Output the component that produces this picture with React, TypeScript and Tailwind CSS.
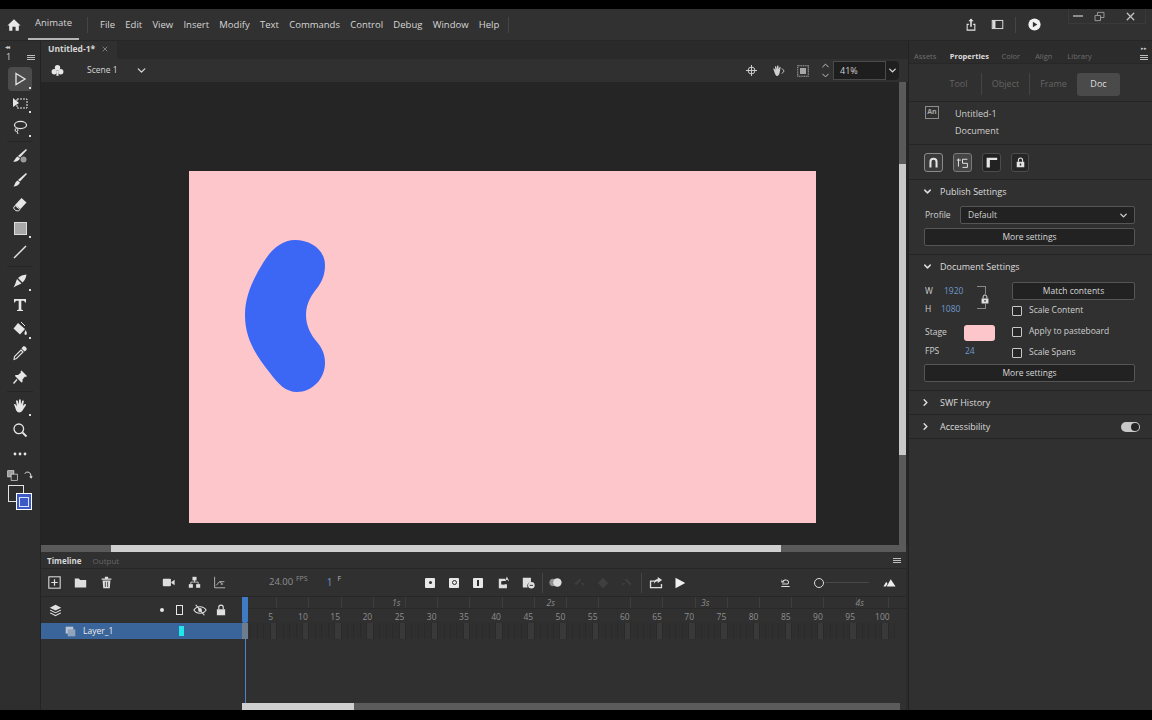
import type { ReactNode } from 'react';
import { ChevronDown, ChevronRight, X } from 'lucide-react';

const Ico = ({ size = 16, children }: { size?: number; children: ReactNode }) => (
  <svg width={size} height={size} viewBox="0 0 16 16" fill="currentColor" className="shrink-0">
    {children}
  </svg>
);

const Burger = () => (
  <div className="flex flex-col gap-px w-2">
    <div className="h-px bg-[#bdbdbd]" />
    <div className="h-px bg-[#bdbdbd]" />
    <div className="h-px bg-[#bdbdbd]" />
  </div>
);

const Tool = ({ children, corner, active }: { children: ReactNode; corner?: boolean; active?: boolean }) => (
  <div className={active ? 'relative w-6 h-6 flex items-center justify-center rounded-sm bg-[#4b4b4b] text-[#e6e6e6]' : 'relative w-6 h-6 flex items-center justify-center text-[#e6e6e6]'}>
    {children}
    {corner && <span className="absolute right-[1px] bottom-[2px] w-[2px] h-[2px] bg-[#e0e0e0]" />}
  </div>
);

const ToolDivider = () => <div className="w-[26px] h-px bg-[#252525] my-[2px]" />;

function Toolbar() {
  return (
    <div className="w-[41px] shrink-0 flex flex-col items-center bg-[#2e2e2e] border-r border-[#232323]">
      <div className="h-[26px] w-full relative text-[#cfcfcf]">
        <div className="absolute left-[5px] top-[2px] text-[6px] leading-[8px] tracking-[-1px]">◂◂</div>
        <div className="absolute left-[6px] top-[10px] text-[9px] leading-[12px]">1</div>
        <div className="absolute left-[27px] top-[14px]"><Burger /></div>
      </div>
      <Tool active corner>
        <Ico><path d="M4 2.5 L13 8 L4 13.5 Z" fill="none" stroke="currentColor" strokeWidth="1.3" /></Ico>
      </Tool>
      <Tool corner>
        <Ico><path d="M1 3 L7 8 L1 12 Z" /><rect x="5" y="4" width="10" height="9" fill="none" stroke="currentColor" strokeDasharray="2 1" /></Ico>
      </Tool>
      <Tool corner>
        <Ico><ellipse cx="8.5" cy="6" rx="6" ry="3.6" fill="none" stroke="currentColor" strokeWidth="1.2" /><circle cx="4.5" cy="11" r="1.5" fill="none" stroke="currentColor" /><path d="M5 12.5 L6 15" stroke="currentColor" /></Ico>
      </Tool>
      <ToolDivider />
      <Tool>
        <Ico><path d="M14 1 L15 2 L8 9.5 L6 8 Z" /><path d="M5.5 8.5 L8 10.5 C7 13 4 14 1 13.5 C3 12.5 3 10 5.5 8.5 Z" /><circle cx="11.5" cy="11.5" r="3" fill="#9a9a9a" /></Ico>
      </Tool>
      <Tool>
        <Ico><path d="M14 1 L15 2 L8 9.5 L6 8 Z" /><path d="M5.5 8.5 L8 10.5 C7 13 4 14.5 1.5 14.5 C3 12.5 3 10 5.5 8.5 Z" /></Ico>
      </Tool>
      <Tool>
        <Ico><path d="M9.5 2 L14.5 6.5 L8.5 13 L3 9 Z" /><path d="M3 9.5 L8 13.5 L6.5 15 L3.5 14.5 L1.5 12 Z" fill="none" stroke="currentColor" /></Ico>
      </Tool>
      <Tool corner>
        <div className="w-[13px] h-[13px] bg-[#a8a8a8] border border-[#dcdcdc]" />
      </Tool>
      <Tool>
        <Ico><path d="M2 14 L14 2" stroke="currentColor" strokeWidth="1.4" /></Ico>
      </Tool>
      <ToolDivider />
      <Tool corner>
        <Ico><path d="M14.5 1.5 C14 5 12.5 8 10.5 9.5 L6 5 C8 3 11 1.8 14.5 1.5 Z" /><path d="M5 6 L9.5 10.5 L4 13 L1.5 14.5 L3 11.5 Z" /></Ico>
      </Tool>
      <Tool>
        <Ico><path d="M2 2 H14 V5.5 H13 C12.7 4.2 12 3.8 10.5 3.8 H9.3 V12 C9.3 12.8 9.7 13 11 13 V14 H5 V13 C6.3 13 6.7 12.8 6.7 12 V3.8 H5.5 C4 3.8 3.3 4.2 3 5.5 H2 Z" /></Ico>
      </Tool>
      <Tool corner>
        <Ico><path d="M6 2 L13 8 L8 13.5 L1.5 7.5 Z" /><path d="M9 1 L13 5" stroke="currentColor" /><path d="M13.5 9 C14.5 11 15.5 12 14.5 13.5 C13.5 14.5 12 13.5 12.5 12 Z" /></Ico>
      </Tool>
      <Tool>
        <Ico><path d="M11 1.5 C12.5 0.5 15.5 3 14.5 5 L12.5 6.5 L9.5 3.5 Z" /><path d="M9 5 L11 7 L4.5 13.5 L2 14.5 L2.5 11.5 Z" fill="none" stroke="currentColor" strokeWidth="1.1" /></Ico>
      </Tool>
      <Tool>
        <Ico><path d="M9 1.5 L14.5 7 L13.5 8 L12.5 7.5 L10 10.5 L10 13 L9 13.5 L2.5 7 L3 6 L5.5 6 L8.5 3.5 L8 2.5 Z" transform="translate(0.5 0)" /><path d="M5 10.5 L1.5 14.5" stroke="currentColor" strokeWidth="1.4" /></Ico>
      </Tool>
      <ToolDivider />
      <Tool corner>
        <Ico><path d="M3 9 L2 6.5 C2.5 5.8 3.5 6 4 7 L5 8.5 L4 3 C4.5 2 5.5 2.2 5.8 3 L6.8 6.5 L7 1.8 C7.5 1 8.5 1 8.8 2 L9 6.5 L10.3 2.8 C11 2 12 2.5 11.8 3.4 L10.8 8 L12.5 6.2 C13.5 5.8 14.3 6.5 13.8 7.5 L10.8 12 C10 14 8 14.8 6 14.3 C4.5 13.8 3.8 11.5 3 9 Z" /></Ico>
      </Tool>
      <Tool>
        <Ico><circle cx="6.8" cy="6.8" r="4.8" fill="none" stroke="currentColor" strokeWidth="1.3" /><path d="M10.5 10.5 L14.5 14.5" stroke="currentColor" strokeWidth="1.8" /></Ico>
      </Tool>
      <Tool>
        <Ico><circle cx="3" cy="8" r="1.4" /><circle cx="8" cy="8" r="1.4" /><circle cx="13" cy="8" r="1.4" /></Ico>
      </Tool>
      <div className="w-[26px] h-[14px] mt-[2px] flex justify-between items-center text-[#e6e6e6]">
        <Ico size={11}><rect x="1" y="1" width="9" height="9" fill="#9c9c9c" stroke="currentColor" /><rect x="6" y="6" width="9" height="9" fill="#2e2e2e" stroke="currentColor" /></Ico>
        <Ico size={10}><path d="M3 6 C4 3 9 2 12 6 L13 11" fill="none" stroke="currentColor" strokeWidth="1.6" /><path d="M10 10 L13 14 L15.5 10 Z" /></Ico>
      </div>
      <div className="relative w-[26px] h-[26px] mt-[3px]">
        <div className="absolute left-[1px] top-0 w-[16px] h-[17px] border border-[#e4e4e4]" />
        <div className="absolute left-[9px] top-[8px] w-[16px] h-[17px] bg-[#3d59c4] border border-[#ffffff] flex items-center justify-center">
          <div className="w-[10px] h-[10px] border border-[#dbe2ff]" />
        </div>
      </div>
    </div>
  );
}

const menus = ['File', 'Edit', 'View', 'Insert', 'Modify', 'Text', 'Commands', 'Control', 'Debug', 'Window', 'Help'];

function MenuBar() {
  return (
    <div className="h-[32px] shrink-0 flex items-center bg-[#313131] border-b border-[#262626] text-[9.5px] text-[#d6d6d6]">
      <div className="w-[28px] pl-[7px] text-[#e8e8e8]">
        <Ico size={14}><path d="M8 1.5 L15.5 8.5 H13.5 V14.5 H9.8 V10 H6.2 V14.5 H2.5 V8.5 H0.5 Z" /></Ico>
      </div>
      <div className="w-[51px] h-full flex items-center justify-center border-b-2 border-[#b5b5b5]">Animate</div>
      <div className="w-px h-[16px] bg-[#454545] ml-[8px]" />
      <div className="flex items-center gap-[10.25px] ml-[12px] pt-[1px]">
        {menus.map((m) => <span key={m}>{m}</span>)}
      </div>
      <div className="w-px h-[16px] bg-[#454545] ml-[9px]" />
      <div className="flex-1" />
      <div className="text-[#e6e6e6] mr-[13px]">
        <Ico size={14}><path d="M3 6.5 H5.5 V8 H4.2 V13.2 H11.8 V8 H10.5 V6.5 H13 V14.5 H3 Z" /><path d="M8 0.5 L11 3.8 H8.9 V10 H7.1 V3.8 H5 Z" /></Ico>
      </div>
      <div className="text-[#dcdcdc] mr-[11px]">
        <Ico size={13}><rect x="1.5" y="3" width="13" height="10" fill="none" stroke="currentColor" strokeWidth="1.2" /><rect x="2" y="3.5" width="3.5" height="9" /></Ico>
      </div>
      <div className="w-px h-[16px] bg-[#454545] mr-[12px]" />
      <div className="text-[#f2f2f2] mr-[27px]">
        <Ico size={13}><circle cx="8" cy="8" r="7.5" /><path d="M6 4.5 L11.5 8 L6 11.5 Z" fill="#313131" /></Ico>
      </div>
      <div className="self-start h-[15px] flex items-center text-[#9b9b9b] border border-[#3a3a3a] border-t-0 mr-[6px] pl-[4px] pr-[8px]">
        <div className="w-[10px] h-[2px] bg-[#8d8d8d] mr-[11px]" />
        <Ico size={11}><path d="M1.5 6.5 H9.5 V14 H1.5 Z M5 6 V2 H14.5 V9.5 H10" fill="none" stroke="currentColor" strokeWidth="1.4" /></Ico>
        <div className="ml-[19px] text-[#c4c4c4]"><X size={13} strokeWidth={2.4} /></div>
      </div>
    </div>
  );
}

function SceneBar() {
  return (
    <div className="h-[23px] shrink-0 flex items-center bg-[#303030] text-[#d6d6d6] text-[8.5px]">
      <div className="ml-[10px] text-[#e6e6e6]">
        <Ico size={13}><circle cx="8" cy="4.6" r="3.3" /><circle cx="4" cy="9.5" r="3.3" /><circle cx="12" cy="9.5" r="3.3" /><path d="M7.3 8 H8.7 L9.5 14.5 H6.5 Z" /></Ico>
      </div>
      <span className="ml-[23px]">Scene 1</span>
      <ChevronDown size={13} strokeWidth={2.4} className="ml-[17px] text-[#d8d8d8]" />
      <div className="flex-1" />
      <div className="mr-[14px] text-[#cfcfcf]">
        <Ico size={11}><circle cx="8" cy="8" r="5" fill="none" stroke="currentColor" strokeWidth="1.4" /><path d="M8 0 V16 M0 8 H16" stroke="currentColor" strokeWidth="1.4" /></Ico>
      </div>
      <div className="mr-[12px] text-[#d0d0d0]">
        <Ico size={14}><path d="M3.5 8 L2.5 5.5 C3 5 4 5.2 4.3 6 L5 7.2 L4.5 3 C5 2.2 5.8 2.5 6 3.2 L6.8 6 L7 2 C7.5 1.4 8.3 1.4 8.5 2.2 L8.8 6.2 L9.8 3.3 C10.4 2.8 11 3.2 10.9 4 L10 9.5 C9.5 12.5 8 14 6.5 13.6 C5 13 4.2 10 3.5 8 Z" /><path d="M12.5 5 L15 8 L12.5 11" fill="none" stroke="currentColor" /></Ico>
      </div>
      <div className="mr-[11px] text-[#a8a8a8]">
        <Ico size={12}><rect x="1" y="1" width="14" height="14" fill="none" stroke="currentColor" strokeWidth="1.4" strokeDasharray="1.5 0.8" /><rect x="4" y="4" width="8" height="8" /></Ico>
      </div>
      <div className="flex flex-col mr-[2px] text-[#cfcfcf]">
        <ChevronDown size={11} strokeWidth={2} className="rotate-180 -mb-[1px]" />
        <ChevronDown size={11} strokeWidth={2} />
      </div>
      <div className="w-[53px] h-[19px] flex items-center pl-[6px] bg-[#1e1e1e] border border-[#4a4a4a] text-[9px] text-[#cfcfcf]">41%</div>
      <div className="w-[13px] h-[19px] flex items-center justify-center bg-[#1f1f1f] rounded-r-sm mr-[9px]">
        <ChevronDown size={11} strokeWidth={3} className="text-[#d8d8d8]" />
      </div>
    </div>
  );
}

function Canvas() {
  return (
    <div className="flex-1 flex min-h-0 bg-[#252525]">
      <div className="flex-1 pl-[148px] pt-[89px]">
        <div className="w-[627px] h-[352px] bg-[#fdc6cb]">
          <svg width="627" height="352" viewBox="0 0 627 352">
            <path d="M106 69 C123 69 136 80 136 94 C136 104 133 110 129 116 C123 123 117 132 117 144 C117 155 122 164 128 171 C133 177 136 183 136 192 C136 208 123 221 108 221 C97 221 89 213 81 202 C67 184 56 168 56 144 C56 125 64 108 74 92 C81 80 92 69 106 69 Z" fill="#3c66f4" />
          </svg>
        </div>
      </div>
      <div className="w-[7px] flex flex-col bg-[#5a5a5a] mr-[2px]">
        <div className="h-[82px]" />
        <div className="h-[291px] bg-[#c9c9c9]" />
      </div>
    </div>
  );
}

const frames = Array.from({ length: 101 }, (_, i) => i + 1);
const secondLabels: Record<number, string> = { 24: '1s', 48: '2s', 72: '3s', 96: '4s' };

function TimelineTools() {
  return (
    <div className="h-[28px] shrink-0 flex items-center border-b border-[#272727] text-[#dedede]">
      <div className="ml-[7px]"><Ico size={13}><rect x="1" y="1" width="14" height="14" fill="none" stroke="currentColor" strokeWidth="1.3" /><path d="M8 4 V12 M4 8 H12" stroke="currentColor" strokeWidth="1.5" /></Ico></div>
      <div className="ml-[13px]"><Ico size={13}><path d="M1 3 H6 L7.5 5 H15 V14 H1 Z" /></Ico></div>
      <div className="ml-[13px]"><Ico size={13}><path d="M6 1 H10 V3 H14 V4.5 H2 V3 H6 Z" /><path d="M3.2 5.5 H12.8 L12 15 H4 Z M6 7 V13.5 H7 V7 Z M9 7 V13.5 H10 V7 Z" fillRule="evenodd" /></Ico></div>
      <div className="ml-[49px]"><Ico size={13}><rect x="1" y="3.5" width="10" height="9" rx="1" /><path d="M11.5 7.5 L15.5 4.5 V11.5 L11.5 8.5 Z" /></Ico></div>
      <div className="ml-[13px]"><Ico size={13}><rect x="5.5" y="1" width="5" height="4.5" /><rect x="1" y="10" width="5" height="4.5" /><rect x="10" y="10" width="5" height="4.5" /><path d="M3.5 10 V7.5 H12.5 V10 M8 5 V7.5" fill="none" stroke="currentColor" /></Ico></div>
      <div className="ml-[12px] text-[#bdbdbd]"><Ico size={13}><path d="M2 1 V14.5 H15" fill="none" stroke="currentColor" strokeWidth="1.1" /><path d="M4 11.5 L8 7 L12 10 M12 10 L9.5 10 M8 7 L14 7" fill="none" stroke="currentColor" strokeWidth="1.1" /></Ico></div>
      <div className="ml-[43px] text-[9.5px] text-[#8f8f8f] w-[27px]">24.00</div>
      <div className="text-[7px] text-[#8f8f8f] -mt-[6px]">FPS</div>
      <div className="ml-[19px] text-[10px] text-[#6f95c4]">1</div>
      <div className="ml-[5px] text-[7px] text-[#b5b5b5] -mt-[6px]">F</div>
      <div className="ml-[84px] w-[10px] h-[10px] bg-[#e8e8e8] rounded-[1px] flex items-center justify-center"><div className="w-[3px] h-[3px] rounded-full bg-[#2c2c2c]" /></div>
      <div className="ml-[14px] w-[10px] h-[10px] bg-[#e8e8e8] rounded-[1px] flex items-center justify-center"><div className="w-[5px] h-[5px] rounded-full border border-[#2c2c2c]" /></div>
      <div className="ml-[14px] w-[10px] h-[10px] bg-[#e8e8e8] rounded-[1px] flex items-center justify-center"><div className="w-[2px] h-[6px] bg-[#2c2c2c]" /></div>
      <div className="ml-[15px]"><Ico size={13}><path d="M1 3.5 H9 V6 H6.5 A2 2 0 0 0 6.5 10 H11 V15 H1 Z" fillRule="evenodd" /><rect x="4" y="6.5" width="4" height="4" fill="#2c2c2c" /><path d="M11 0.5 L13.5 6 H12.5 L12 4.8 H10 L9.5 6 H8.5 Z" fill="#cfcfcf" /></Ico></div>
      <div className="ml-[11px]"><Ico size={13}><path d="M1 2 H11 V8 A4 4 0 0 0 7 14 H1 Z" /><circle cx="11.5" cy="11.5" r="4" fill="#e0e0e0" /><path d="M9.5 11.5 H13.5" stroke="#2c2c2c" strokeWidth="1.2" /></Ico></div>
      <div className="w-px h-[20px] bg-[#454545] ml-[7px]" />
      <div className="ml-[5px]"><Ico size={15}><circle cx="5.5" cy="8" r="4" fill="#8f8f8f" /><circle cx="10" cy="8" r="4.5" /></Ico></div>
      <div className="ml-[10px] text-[#3f3f3f]"><Ico size={12}><path d="M2 9 L9 2 L11 4 L4 11 Z M10 8 L14 8 L14 12 Z" /></Ico></div>
      <div className="ml-[12px] text-[#3f3f3f]"><Ico size={12}><path d="M8 1 L15 8 L8 15 L1 8 Z" /></Ico></div>
      <div className="ml-[12px] text-[#3f3f3f]"><Ico size={12}><path d="M14 9 L7 2 L5 4 L12 11 Z M6 8 L2 8 L2 12 Z" /></Ico></div>
      <div className="w-px h-[20px] bg-[#454545] ml-[8px]" />
      <div className="ml-[7px]"><Ico size={14}><path d="M1 5 H7 V6.5 H2.5 V12.5 H13.5 V9 H15 V14 H1 Z" /><path d="M10 1 L15 4.5 L10 8 V6 C8 6 6.5 7 5.5 9 C5.5 6 7 4 10 3.5 Z" /></Ico></div>
      <div className="ml-[11px] text-[#f0f0f0]"><Ico size={12}><path d="M2 1 L15 8 L2 15 Z" /></Ico></div>
      <div className="flex-1" />
      <div className="mr-[23px] text-[#e0e0e0]"><Ico size={11}><path d="M2 13 H14 V14.5 H2 Z M3 6 C6 2.5 12 3 13 7 C13.5 9 12.5 10.5 11 11 H3 V9.5 H10.5 C11.5 9 12 8 11.5 7 C10.8 4.8 7 4.5 5 6.5 L7 8 H2 V3 Z" /></Ico></div>
      <div className="w-[10px] h-[10px] rounded-full border-[1.5px] border-[#dcdcdc]" />
      <div className="w-[44px] h-px bg-[#484848] ml-[1px]" />
      <div className="ml-[14px] mr-[10px] text-[#ededed]"><Ico size={13}><path d="M0.5 13 L4 7 L5.5 9.5 L3.5 13 Z M4.5 13 L9.5 4 L15.5 13 Z" /></Ico></div>
    </div>
  );
}

function Timeline() {
  return (
    <div className="h-[158px] shrink-0 flex flex-col bg-[#303030] mr-[2px]">
      <div className="h-[17px] shrink-0 flex items-center pt-[1px] border-b border-[#272727] text-[8px]">
        <span className="ml-[6px] font-bold text-[#d8d8d8]">Timeline</span>
        <span className="ml-[11px] text-[#666666]">Output</span>
        <div className="flex-1" />
        <div className="mr-[5px]"><Burger /></div>
      </div>
      <TimelineTools />
      <div className="flex-1 min-h-0 flex relative">
        <div className="w-[204px] shrink-0 flex flex-col">
          <div className="h-[26px] flex items-center text-[#e0e0e0]">
            <div className="ml-[8px]"><Ico size={13}><path d="M8 1 L15 4.5 L8 8 L1 4.5 Z" /><path d="M2 7 L8 10 L14 7 L15 8 L8 11.5 L1 8 Z" /><path d="M2 10.5 L8 13.5 L14 10.5 L15 11.5 L8 15 L1 11.5 Z" /></Ico></div>
            <div className="ml-[98px] w-[4px] h-[4px] rounded-full bg-[#e6e6e6]" />
            <div className="ml-[12px] w-[7px] h-[10px] border-[1.5px] border-[#e6e6e6]" />
            <div className="ml-[10px]"><Ico size={14}><path d="M1 8 C4 3 12 3 15 8 C12 13 4 13 1 8 Z" fill="none" stroke="currentColor" strokeWidth="1.2" /><circle cx="8" cy="8" r="2.2" /><path d="M3 2 L13 14" stroke="currentColor" strokeWidth="1.3" /></Ico></div>
            <div className="ml-[8px]"><Ico size={12}><path d="M5 7 V4.5 A3 3 0 0 1 11 4.5 V7" fill="none" stroke="currentColor" strokeWidth="1.5" /><rect x="2.5" y="7" width="11" height="8" /></Ico></div>
          </div>
          <div className="h-[16px] flex items-center bg-[#3a659a] text-[8.5px] text-[#eaeaea]">
            <div className="ml-[24px] text-[#b8c4d4]"><Ico size={11}><rect x="1" y="1" width="11" height="10" /><rect x="4" y="5" width="11" height="10" fill="#8fa3bb" /></Ico></div>
            <span className="ml-[7px]">Layer_1</span>
            <div className="ml-[66px] w-[5px] h-[10px] bg-[#22e6ee]" />
          </div>
        </div>
        <div className="flex-1 min-w-0 flex flex-col overflow-hidden">
          <div className="h-[12px] flex border-b border-[#292929]">
            {frames.map((n) => (
              <div key={n} className={n % 5 === 0 ? 'w-[6.453px] shrink-0 flex justify-center border-r border-[#3d3d3d] text-[8.5px] leading-[12px] italic text-[#8d8d8d] whitespace-nowrap' : 'w-[6.453px] shrink-0 flex justify-center text-[8.5px] leading-[12px] italic text-[#8d8d8d] whitespace-nowrap'}>
                {secondLabels[n] ?? ''}
              </div>
            ))}
          </div>
          <div className="h-[14px] flex">
            {frames.map((n) => (
              <div key={n} className="w-[6.453px] shrink-0 flex justify-center pr-[6.4px] text-[8.5px] leading-[15px] text-[#8f8f8f] whitespace-nowrap">
                {n % 5 === 0 ? n : ''}
              </div>
            ))}
          </div>
          <div className="h-[16px] flex">
            {frames.map((n) => (
              <div key={n} className={n % 5 === 0 ? 'w-[6.453px] shrink-0 bg-[#393939] border-r border-[#2a2a2a]' : 'w-[6.453px] shrink-0 bg-[#2f2f2f] border-r border-[#2a2a2a]'} />
            ))}
          </div>
        </div>
        <div className="absolute left-[201px] top-0 bottom-0 w-[6px] flex flex-col items-center">
          <div className="w-[6px] h-[26px] bg-[#3f7bc4] rounded-b-[2px]" />
          <div className="w-[6px] h-[16px] bg-[#6d7c8e]" />
          <div className="w-px flex-1 bg-[#4a86cf]" />
        </div>
      </div>
      <div className="h-[7px] shrink-0 flex mr-[6px] bg-[#5b5b5b]">
        <div className="w-[201px] bg-[#303030]" />
        <div className="w-[112px] bg-[#cfcfcf]" />
      </div>
    </div>
  );
}

const Section = ({ title, open, children }: { title: string; open?: boolean; children?: ReactNode }) => (
  <div className="border-b border-[#242424]">
    <div className="h-[23px] flex items-center text-[9px] font-medium text-[#dcdcdc]">
      <div className="w-[31px] pl-[13px]">
        {open ? <ChevronDown size={11} strokeWidth={3.2} /> : <ChevronRight size={11} strokeWidth={3.2} className="-ml-[2px]" />}
      </div>
      <span>{title}</span>
    </div>
    {children}
  </div>
);

const DarkButton = ({ label }: { label: string }) => (
  <div className="h-[18px] flex items-center justify-center bg-[#222222] border border-[#555555] rounded-[2px] text-[8.5px] text-[#d8d8d8]">{label}</div>
);

const Checkbox = ({ label }: { label: string }) => (
  <div className="h-[21px] flex items-center text-[8.5px] text-[#cfcfcf]">
    <div className="w-[10px] h-[10px] border border-[#c8c8c8] rounded-[1px] mr-[7px] bg-[#262626]" />
    <span>{label}</span>
  </div>
);

function PropertiesPanel() {
  return (
    <div className="w-[244px] shrink-0 flex flex-col bg-[#303030] border-l border-[#222222]">
      <div className="h-[10px] shrink-0 flex justify-end items-end pr-[5px] text-[5px] leading-[6px] text-[#cfcfcf] bg-[#2c2c2c]">▸▸</div>
      <div className="h-[13px] shrink-0 flex items-center border-b border-[#272727] text-[7.5px] text-[#6e6e6e] bg-[#2c2c2c]">
        <span className="ml-[5px]">Assets</span>
        <span className="ml-[13.5px] font-bold text-[#dedede]">Properties</span>
        <span className="ml-[12.5px]">Color</span>
        <span className="ml-[15px]">Align</span>
        <span className="ml-[15px]">Library</span>
        <div className="flex-1" />
        <div className="mr-[4px]"><Burger /></div>
      </div>
      <div className="h-[38px] shrink-0 flex items-center pt-[3px] border-b border-[#252525] text-[9px] text-[#646464]">
        <div className="w-[45px] ml-[27px] flex items-center justify-center">Tool</div>
        <div className="w-px h-[22px] bg-[#444444]" />
        <div className="w-[47px] flex items-center justify-center">Object</div>
        <div className="w-px h-[22px] bg-[#444444]" />
        <div className="w-[47px] flex items-center justify-center">Frame</div>
        <div className="w-[43px] h-[23px] flex items-center justify-center rounded-[3px] bg-[#4a4a4a] text-[#dfdfdf]">Doc</div>
      </div>
      <div className="h-[43px] shrink-0 flex border-b border-[#252525] text-[9px] text-[#cfcfcf]">
        <div className="ml-[16px] mt-[4px] w-[14px] h-[13px] border border-[#8d8d8d] flex items-center justify-center text-[7px] font-bold text-[#a8a8a8]">An</div>
        <div className="ml-[16px] flex flex-col">
          <span className="leading-[12px] mt-[6px]">Untitled-1</span>
          <span className="leading-[12px] mt-[5px]">Document</span>
        </div>
      </div>
      <div className="h-[35px] shrink-0 flex items-center gap-[10px] pl-[15px] border-b border-[#252525] text-[#e4e4e4]">
        <div className="w-[19px] h-[19px] flex items-center justify-center rounded-[3px] bg-[#3a3a3a] border border-[#8a8a8a]">
          <Ico size={13}><path d="M3 14 V7 A5 5 0 0 1 13 7 V14 H10.5 V7 A2.5 2.5 0 0 0 5.5 7 V14 Z" /></Ico>
        </div>
        <div className="w-[19px] h-[19px] flex items-center justify-center rounded-[3px] bg-[#454545] border border-[#7a7a7a]">
          <Ico size={13}><path d="M3 3 V13 M1 5 H6 M8 4 H14 M8 4 V9 H14 V14 H8" fill="none" stroke="currentColor" strokeWidth="1.2" /></Ico>
        </div>
        <div className="w-[19px] h-[19px] flex items-center justify-center rounded-[3px] bg-[#222222] border border-[#4c4c4c]">
          <Ico size={13}><path d="M2 2 H15 V5 H6 V14 H2 Z" /></Ico>
        </div>
        <div className="w-[18px] h-[19px] flex items-center justify-center rounded-[3px] bg-[#262626] border border-[#4c4c4c]">
          <Ico size={11}><path d="M5 7 V4.5 A3 3 0 0 1 11 4.5 V7" fill="none" stroke="currentColor" strokeWidth="1.6" /><path d="M2.5 7 H13.5 V15 H2.5 Z M7 9.5 V12.5 H9 V9.5 Z" fillRule="evenodd" /></Ico>
        </div>
      </div>
      <Section title="Publish Settings" open>
        <div className="pl-[15px] pr-[17px] pb-[8px] flex flex-col gap-[4px] mt-[3px]">
          <div className="flex items-center text-[8.5px] text-[#d0d0d0]">
            <span className="w-[36px] pl-px">Profile</span>
            <div className="flex-1 h-[18px] flex items-center justify-between pl-[7px] pr-[5px] bg-[#222222] border border-[#555555] rounded-[2px]">
              <span>Default</span>
              <ChevronDown size={11} strokeWidth={3} />
            </div>
          </div>
          <DarkButton label="More settings" />
        </div>
      </Section>
      <Section title="Document Settings" open>
        <div className="pl-[15px] pr-[17px] pb-[8px] mt-[4px]">
          <div className="flex">
            <div className="w-[88px] shrink-0 flex flex-col pl-px text-[8.5px] text-[#d0d0d0]">
              <div className="flex h-[36px]">
                <div className="w-[52px] flex flex-col">
                  <div className="h-[18px] flex items-center"><span className="w-[19px]">W</span><span className="text-[#6f98cc]">1920</span></div>
                  <div className="h-[18px] flex items-center"><span className="w-[16px]">H</span><span className="text-[#6f98cc]">1080</span></div>
                </div>
                <div className="relative w-[9px] h-[23px] mt-[4px] border-y border-r border-[#888888]">
                  <div className="absolute -right-[5px] top-[7px] bg-[#303030] text-[#dfdfdf]"><Ico size={10}><path d="M5 7 V4.5 A3 3 0 0 1 11 4.5 V7" fill="none" stroke="currentColor" strokeWidth="1.6" /><path d="M2.5 7 H13.5 V15 H2.5 Z M7 9.5 V12.5 H9 V9.5 Z" fillRule="evenodd" /></Ico></div>
                </div>
              </div>
              <div className="h-[23px] flex items-center mt-[3px]">
                <span className="w-[39px]">Stage</span>
                <div className="w-[31px] h-[16px] rounded-[3px] bg-[#fcc6cb]" />
              </div>
              <div className="h-[14px] flex items-center">
                <span className="w-[40px]">FPS</span>
                <span className="text-[#6f98cc]">24</span>
              </div>
            </div>
            <div className="flex-1 min-w-0 flex flex-col">
              <DarkButton label="Match contents" />
              <Checkbox label="Scale Content" />
              <Checkbox label="Apply to pasteboard" />
              <Checkbox label="Scale Spans" />
            </div>
          </div>
          <div className="mt-[1px]"><DarkButton label="More settings" /></div>
        </div>
      </Section>
      <Section title="SWF History" />
      <Section title="Accessibility">
        <div className="h-0 relative">
          <div className="absolute right-[12px] -top-[16px] w-[19px] h-[10px] rounded-full bg-[#c8c8c8] flex justify-end items-center pr-[1px]">
            <div className="w-[8px] h-[8px] rounded-full bg-[#242424]" />
          </div>
        </div>
      </Section>
    </div>
  );
}

export default function App() {
  return (
    <div className="w-[1152px] h-[720px] flex flex-col bg-black pt-[9px] pb-[10px] overflow-hidden font-['Open_Sans',sans-serif]">
      <MenuBar />
      <div className="flex-1 min-h-0 flex">
        <Toolbar />
        <div className="flex-1 min-w-0 flex flex-col bg-[#2b2b2b]">
          <div className="h-[18px] shrink-0 flex bg-[#2a2a2a]">
            <div className="w-[76px] flex items-center pb-[2px] bg-[#303030] pl-[7px] text-[8.5px] font-bold text-[#d4d4d4]">
              Untitled-1*
              <X size={8} strokeWidth={1.6} className="ml-[6px] text-[#bdbdbd]" />
            </div>
          </div>
          <SceneBar />
          <Canvas />
          <div className="h-[7px] shrink-0 flex bg-[#5a5a5a] mr-[2px]">
            <div className="w-[70px]" />
            <div className="w-[670px] bg-[#cfcfcf]" />
          </div>
          <Timeline />
        </div>
        <PropertiesPanel />
      </div>
    </div>
  );
}
